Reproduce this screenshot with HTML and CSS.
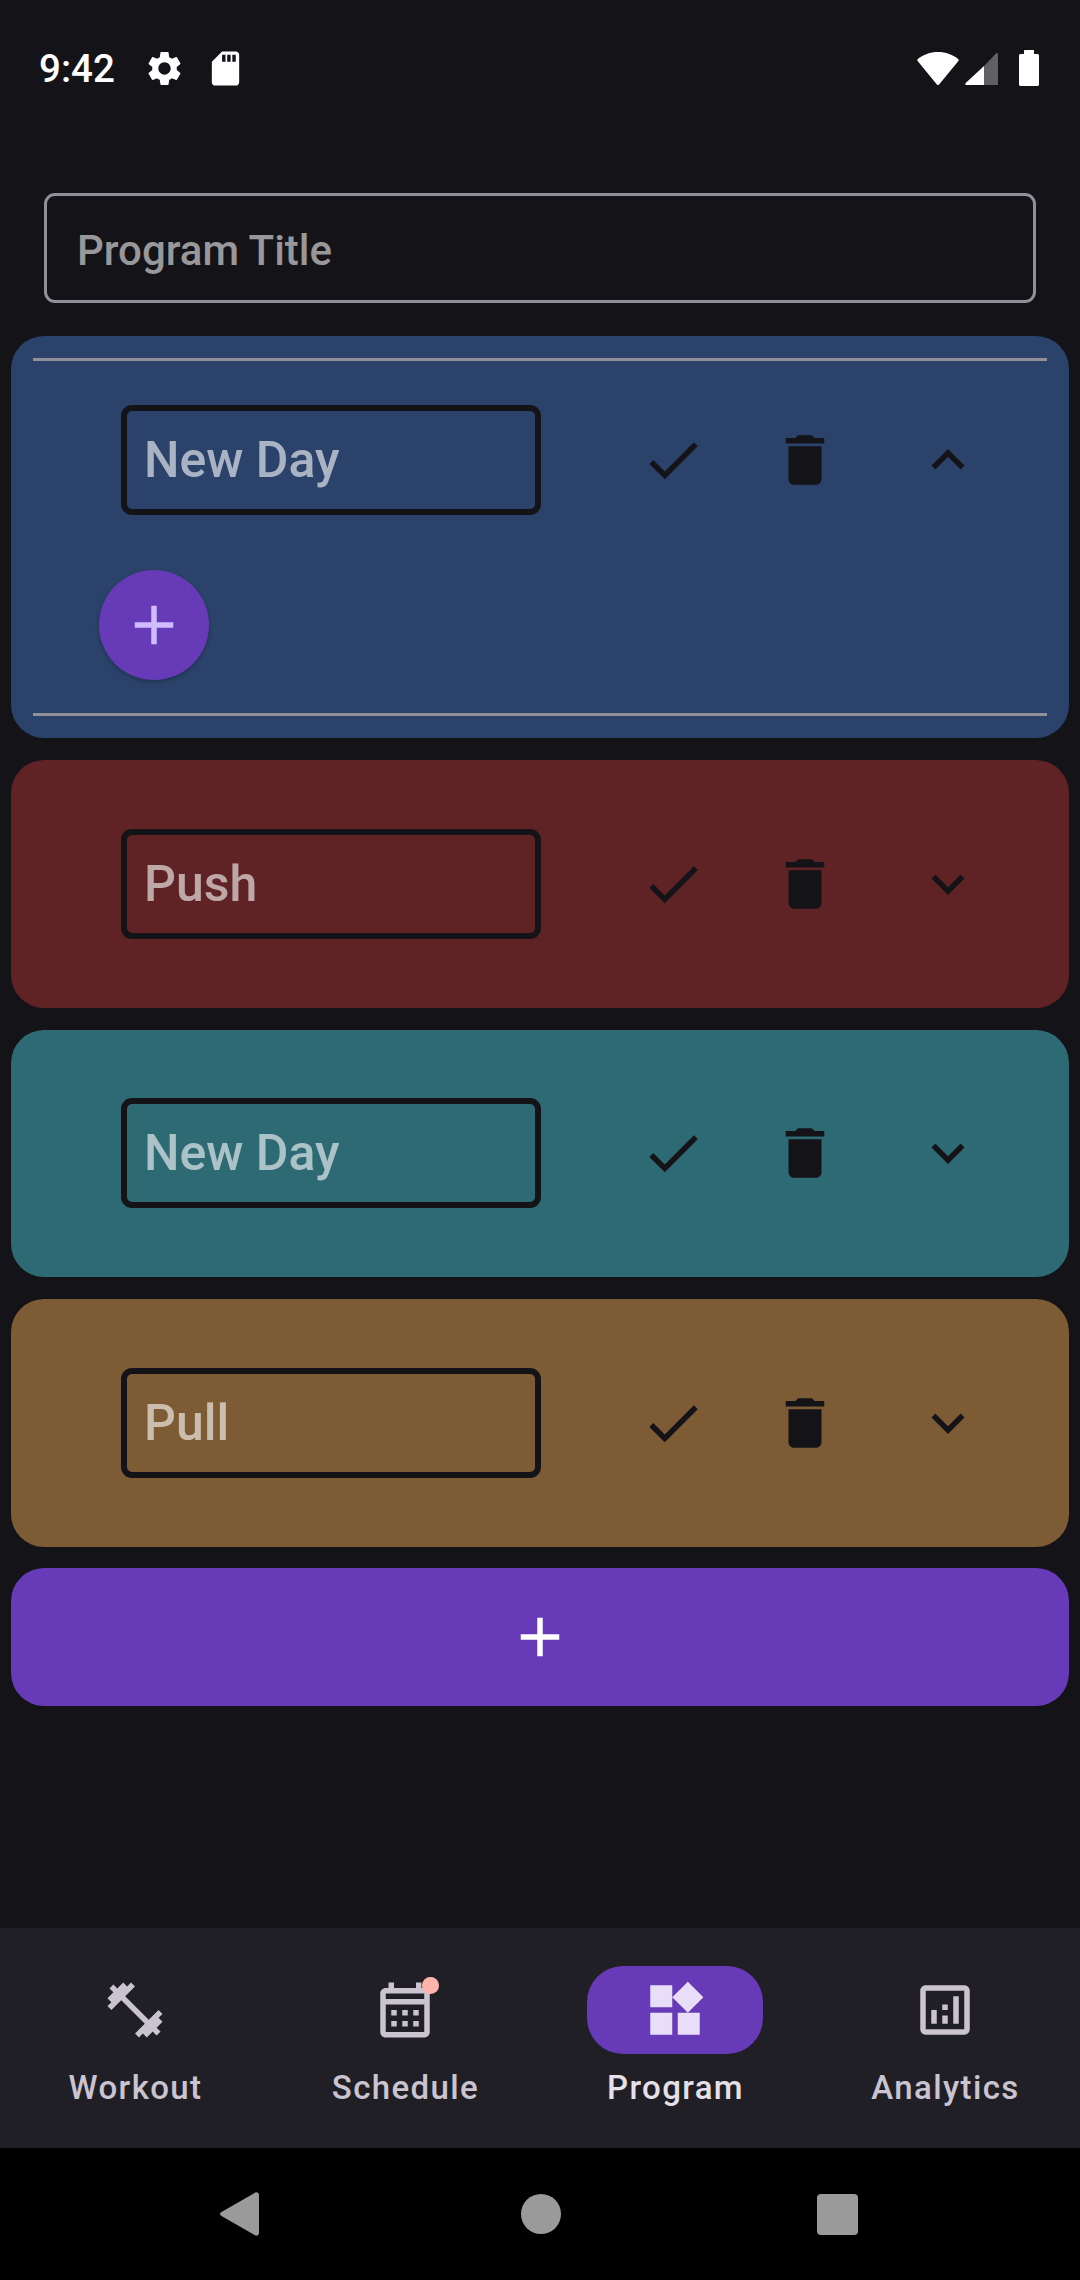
FILE: index.html
```html
<!DOCTYPE html>
<html lang="en">
  <head>
    <meta charset="UTF-8" />
    <meta name="viewport" content="width=device-width, initial-scale=1.0" />
    <title>Program</title>
    <link rel="stylesheet" href="styles.css">
  </head>
  <body>
    <div class="screen">
      <div class="status-bar">
        <span class="status-time">9:42</span>
        <svg class="status-icon gear" viewBox="0 0 24 24"><path d="M19.14 12.94c.04-.3.06-.61.06-.94 0-.32-.02-.64-.07-.94l2.03-1.58c.18-.14.23-.41.12-.61l-1.92-3.32c-.12-.22-.37-.29-.59-.22l-2.39.96c-.5-.38-1.03-.7-1.62-.94l-.36-2.54c-.04-.24-.24-.41-.48-.41h-3.84c-.24 0-.43.17-.47.41l-.36 2.54c-.59.24-1.13.57-1.62.94l-2.39-.96c-.22-.08-.47 0-.59.22L2.74 8.87c-.12.21-.08.47.12.61l2.03 1.58c-.05.3-.09.63-.09.94s.02.64.07.94l-2.03 1.58c-.18.14-.23.41-.12.61l1.92 3.32c.12.22.37.29.59.22l2.39-.96c.5.38 1.03.7 1.62.94l.36 2.54c.05.24.24.41.48.41h3.84c.24 0 .44-.17.47-.41l.36-2.54c.59-.24 1.13-.56 1.62-.94l2.39.96c.22.08.47 0 .59-.22l1.92-3.32c.12-.22.07-.47-.12-.61l-2.01-1.58zM12 15.6c-1.98 0-3.6-1.62-3.6-3.6s1.62-3.6 3.6-3.6 3.6 1.62 3.6 3.6-1.62 3.6-3.6 3.6z"/></svg>
        <svg class="status-icon sd" viewBox="0 0 24 24"><path d="M18 2h-8L4.02 8 4 20c0 1.1.9 2 2 2h12c1.1 0 2-.9 2-2V4c0-1.1-.9-2-2-2zm-6 6h-2V4h2v4zm3 0h-2V4h2v4zm3 0h-2V4h2v4z"/></svg>
        <svg class="wifi" viewBox="0 0 42 33"><path d="M.6 7.2C.2 7.7.2 8.4.6 8.9l19.3 23.5c.6.7 1.6.7 2.2 0L41.4 8.9c.4-.5.4-1.2 0-1.7C36 2.700 28.900 0 21 0S6 2.700.6 7.200z"/></svg>
        <svg class="signal" viewBox="0 0 33 33"><path class="signal-off" d="M19 14 31 1.500c.8-.8 2-.3 2 .8V33H19z"/><path d="M19 14V33H1.500c-1.100 0-1.600-1.200-.8-2z"/></svg>
        <svg class="battery" viewBox="0 0 20 36"><path d="M5 4V1c0-.6.4-1 1-1h8c.6 0 1 .4 1 1v3h3.500c.8 0 1.500.7 1.500 1.500v29c0 .8-.7 1.500-1.500 1.500H1.500C.7 36 0 35.300 0 34.500v-29C0 4.700.7 4 1.500 4z"/></svg>
      </div>

      <div class="title-field">Program Title</div>

      <div class="day-list">
        <div class="day day-open day-blue">
          <div class="day-line"></div>
          <div class="day-row">
            <div class="day-name">New Day</div>
            <svg class="icon icon-check" viewBox="0 0 24 24"><path d="M9 16.170 4.830 12l-1.420 1.410L9 19 21 7l-1.410-1.410z"/></svg>
            <svg class="icon icon-trash" viewBox="0 0 24 24"><path d="M6 19c0 1.100.9 2 2 2h8c1.100 0 2-.9 2-2V7H6v12zM19 4h-3.500l-1-1h-5l-1 1H5v2h14V4z"/></svg>
            <svg class="icon icon-chevron" viewBox="0 0 24 24"><path d="M12 8l-6 6 1.410 1.410L12 10.830l4.590 4.580L18 14z"/></svg>
          </div>
          <button class="fab" type="button">
            <svg class="icon" viewBox="0 0 24 24"><path d="M19 13h-6v6h-2v-6H5v-2h6V5h2v6h6v2z"/></svg>
          </button>
          <div class="day-line day-line-bottom"></div>
        </div>

        <div class="day day-red">
          <div class="day-row">
            <div class="day-name">Push</div>
            <svg class="icon icon-check" viewBox="0 0 24 24"><path d="M9 16.170 4.830 12l-1.420 1.410L9 19 21 7l-1.410-1.410z"/></svg>
            <svg class="icon icon-trash" viewBox="0 0 24 24"><path d="M6 19c0 1.100.9 2 2 2h8c1.100 0 2-.9 2-2V7H6v12zM19 4h-3.500l-1-1h-5l-1 1H5v2h14V4z"/></svg>
            <svg class="icon icon-chevron" viewBox="0 0 24 24"><path d="M16.590 8.590 12 13.170 7.410 8.590 6 10l6 6 6-6z"/></svg>
          </div>
        </div>

        <div class="day day-teal">
          <div class="day-row">
            <div class="day-name">New Day</div>
            <svg class="icon icon-check" viewBox="0 0 24 24"><path d="M9 16.170 4.830 12l-1.420 1.410L9 19 21 7l-1.410-1.410z"/></svg>
            <svg class="icon icon-trash" viewBox="0 0 24 24"><path d="M6 19c0 1.100.9 2 2 2h8c1.100 0 2-.9 2-2V7H6v12zM19 4h-3.500l-1-1h-5l-1 1H5v2h14V4z"/></svg>
            <svg class="icon icon-chevron" viewBox="0 0 24 24"><path d="M16.590 8.590 12 13.170 7.410 8.590 6 10l6 6 6-6z"/></svg>
          </div>
        </div>

        <div class="day day-brown">
          <div class="day-row">
            <div class="day-name">Pull</div>
            <svg class="icon icon-check" viewBox="0 0 24 24"><path d="M9 16.170 4.830 12l-1.420 1.410L9 19 21 7l-1.410-1.410z"/></svg>
            <svg class="icon icon-trash" viewBox="0 0 24 24"><path d="M6 19c0 1.100.9 2 2 2h8c1.100 0 2-.9 2-2V7H6v12zM19 4h-3.500l-1-1h-5l-1 1H5v2h14V4z"/></svg>
            <svg class="icon icon-chevron" viewBox="0 0 24 24"><path d="M16.590 8.590 12 13.170 7.410 8.590 6 10l6 6 6-6z"/></svg>
          </div>
        </div>

        <button class="add-day" type="button">
          <svg class="icon" viewBox="0 0 24 24"><path d="M19 13h-6v6h-2v-6H5v-2h6V5h2v6h6v2z"/></svg>
        </button>
      </div>

      <nav class="bottom-nav">
        <div class="nav-item">
          <div class="nav-pill">
            <svg class="icon" viewBox="0 0 24 24"><path d="M20.570 14.860 22 13.430 20.570 12 17 15.570 8.430 7 12 3.430 10.570 2 9.140 3.430 7.710 2 5.570 4.140 4.140 2.710 2.710 4.140l1.430 1.430L2 7.710l1.430 1.430L2 10.570 3.430 12 7 8.430 15.570 17 12 20.570 13.430 22l1.430-1.430L16.290 22l2.140-2.140 1.430 1.430 1.430-1.430-1.430-1.430L22 16.290z"/></svg>
          </div>
          <span class="nav-label">Workout</span>
        </div>
        <div class="nav-item">
          <div class="nav-pill">
            <svg class="icon" viewBox="0 0 24 24"><path d="M19 4h-1V2h-2v2H8V2H6v2H5c-1.100 0-2 .9-2 2v14c0 1.100.9 2 2 2h14c1.100 0 2-.9 2-2V6c0-1.100-.9-2-2-2zm0 16H5V10h14v10zm0-12H5V6h14v2zM7 12h2v2H7zm4 0h2v2h-2zm4 0h2v2h-2zM7 16h2v2H7zm4 0h2v2h-2zm4 0h2v2h-2z"/></svg>
            <span class="nav-badge"></span>
          </div>
          <span class="nav-label">Schedule</span>
        </div>
        <div class="nav-item nav-item-active">
          <div class="nav-pill">
            <svg class="icon" viewBox="0 0 24 24"><path d="M13 13v8h8v-8h-8zM3 21h8v-8H3v8zM3 3v8h8V3H3zm13.660-1.310L11 7.340 16.660 13l5.660-5.660-5.660-5.650z"/></svg>
          </div>
          <span class="nav-label">Program</span>
        </div>
        <div class="nav-item">
          <div class="nav-pill">
            <svg class="icon" viewBox="0 0 24 24"><path d="M19 3H5c-1.100 0-2 .9-2 2v14c0 1.100.9 2 2 2h14c1.100 0 2-.9 2-2V5c0-1.100-.9-2-2-2zm0 16H5V5h14v14zM7 12h2v5H7zm8-5h2v10h-2zm-4 7h2v3h-2zm0-4h2v2h-2z"/></svg>
          </div>
          <span class="nav-label">Analytics</span>
        </div>
      </nav>

      <div class="system-bar">
        <svg class="sys-back" viewBox="0 0 39 44"><path d="M1.500 20 35 .7c1.800-1 4 .2 4 2.300v38c0 2.100-2.200 3.300-4 2.300L1.500 24c-2-1.100-2-2.900 0-4z"/></svg>
        <span class="sys-home"></span>
        <span class="sys-recent"></span>
      </div>
    </div>
  </body>
</html>
```

FILE: styles.css
```css
*,
*::before,
*::after {
  margin: 0;
  padding: 0;
  box-sizing: border-box;
}
html,
body {
  width: 100%;
  height: 100%;
  font-family: Roboto, "Liberation Sans", sans-serif;
  background-color: #141318;
}

.screen {
  display: flex;
  flex-direction: column;
  height: 2280px;
  overflow: hidden;
}

/* status bar */
.status-bar {
  display: flex;
  align-items: center;
  height: 136px;
  padding: 0 41px 0 39px;
  color: #fff;
  fill: #fff;
}

.status-time {
  width: 105px;
  padding-top: 2px;
  font-size: 38.500px;
  font-weight: 500;
  line-height: 44px;
}

.status-icon {
  width: 41px;
  height: 41px;
}

.sd {
  margin-left: 20px;
}

.wifi {
  width: 42px;
  height: 33px;
  margin-left: auto;
}

.signal {
  width: 33px;
  height: 33px;
  margin-left: 6px;
}

.signal-off {
  fill: #605f63;
}

.battery {
  width: 20px;
  height: 36px;
  margin-left: 21px;
}

/* title */
.title-field {
  display: flex;
  align-items: center;
  height: 110px;
  margin: 57px 44px 0;
  padding: 4px 0 0 30px;
  border: 3px solid #938f99;
  border-radius: 11px;
  font-size: 42px;
  font-weight: 500;
  color: rgba(255, 255, 255, 0.57);
}

/* days */
.day-list {
  display: flex;
  flex-direction: column;
  gap: 22px;
  margin-top: 33px;
  padding: 0 11px;
}

.day {
  padding: 68.750px 0;
  border-radius: 33px;
}

.day-open {
  padding: 22px 0;
}

.day-blue {
  background-color: #2b436a;
}

.day-red {
  background-color: #5f2326;
}

.day-teal {
  background-color: #2e6a73;
}

.day-brown {
  background-color: #7d5c35;
}

.day-line {
  height: 3px;
  margin: 0 22px;
  background-color: #938f99;
}

.day-line-bottom {
  margin-top: 33px;
}

.day-open .day-row {
  margin-top: 44px;
}

.day-row {
  display: flex;
  align-items: center;
  padding-left: 110px;
}

.day-name {
  display: flex;
  align-items: center;
  width: 420px;
  height: 110px;
  padding-left: 17px;
  border: 6px solid #141318;
  border-radius: 11px;
  font-size: 50px;
  font-weight: 500;
  color: rgba(255, 255, 255, 0.6);
}

.icon {
  display: block;
  width: 66px;
  height: 66px;
  flex-shrink: 0;
  fill: currentColor;
}

.day-row .icon {
  color: #141318;
}

.icon-check {
  margin-left: 99px;
}

.icon-trash {
  margin-left: 66px;
}

.icon-chevron {
  margin-left: 77px;
}

.fab {
  display: flex;
  align-items: center;
  justify-content: center;
  width: 110px;
  height: 110px;
  margin: 55px 0 0 88px;
  border: none;
  border-radius: 50%;
  background-color: #673ab7;
  color: #d0bcff;
  box-shadow: 0 2px 4px rgba(0, 0, 0, 0.25);
}

.add-day {
  display: flex;
  align-items: center;
  justify-content: center;
  height: 138px;
  margin-top: -1px;
  border: none;
  border-radius: 33px;
  background-color: #673ab7;
  color: #fff;
}

/* bottom nav */
.bottom-nav {
  display: grid;
  grid-template-columns: repeat(4, 1fr);
  height: 220px;
  margin-top: auto;
  padding-top: 38px;
  background-color: #211f26;
}

.nav-item {
  display: flex;
  flex-direction: column;
  align-items: center;
  color: #cac4d0;
}

.nav-pill {
  position: relative;
  display: flex;
  align-items: center;
  justify-content: center;
  width: 176px;
  height: 88px;
  border-radius: 36px;
}

.nav-item-active .nav-pill {
  background-color: #673ab7;
  color: #e8def8;
}

.nav-item-active .nav-label {
  color: #e6e0e9;
}

.nav-label {
  margin-top: 12px;
  padding-left: 1px;
  font-size: 33px;
  font-weight: 500;
  line-height: 44px;
  letter-spacing: 1.375px;
}

.nav-badge {
  position: absolute;
  top: 11px;
  left: 105px;
  width: 16.500px;
  height: 16.500px;
  border-radius: 50%;
  background-color: #ffb4ab;
}

/* system nav */
.system-bar {
  display: flex;
  align-items: center;
  height: 132px;
  padding-left: 220px;
  background-color: #000;
}

.sys-back {
  width: 39px;
  height: 44px;
  fill: #9a9a9a;
}

.sys-home {
  width: 40px;
  height: 40px;
  margin-left: 262px;
  border-radius: 50%;
  background-color: #9a9a9a;
}

.sys-recent {
  width: 41px;
  height: 41px;
  margin-left: 256px;
  border-radius: 4px;
  background-color: #9a9a9a;
}
```
